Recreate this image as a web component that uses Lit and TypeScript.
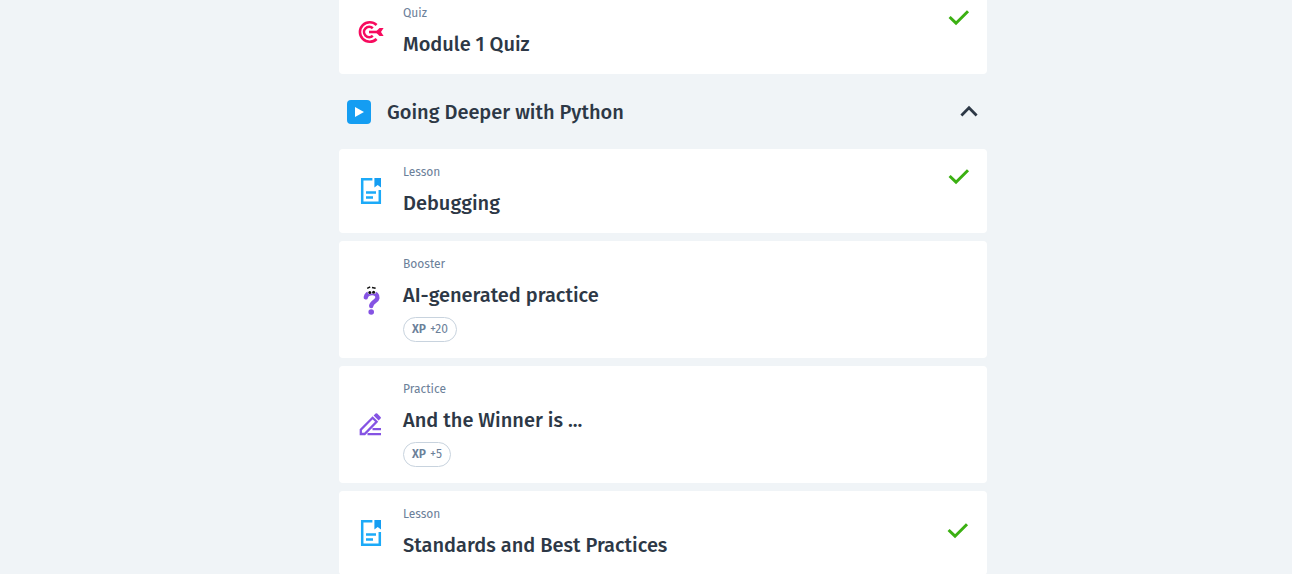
import { LitElement, html, css, svg, nothing } from "lit";
import { customElement, property, state } from "lit/decorators.js";
import { classMap } from "lit/directives/class-map.js";

type Kind = "Quiz" | "Lesson" | "Booster" | "Practice";

interface Item {
  kind: Kind;
  title: string;
  xp?: number;
  done?: boolean;
  current?: boolean;
}

const glyphs = {
  Quiz: svg`
    <g fill="none" stroke="#f70b5e" stroke-width="2.6">
      <path d="M21.6 9A9.8 9.8 0 1 0 21.6 23"/>
      <path d="M17.8 12.2A5.2 5.2 0 1 0 17.8 19.8"/>
      <path d="M14 16H25"/>
    </g>
    <path fill="#f70b5e" d="M20.5 16L24.5 12H28.6L26 16L28.6 20H24.5Z"/>`,
  Lesson: svg`
    <g fill="none" stroke="#1caaf8" stroke-width="2.5">
      <path d="M17.4 4.2H7.2V27.8H24.8V15"/>
      <path d="M11 17.6H21M11 22.4H18"/>
    </g>
    <path fill="#149df2" d="M19.4 3H26V12.5L22.7 10L19.4 12.5Z"/>`,
  Booster: svg`
    <path fill="none" stroke="#8553e3" stroke-width="4.4" stroke-linecap="round" d="M10.8 13.4C11.4 10 14.6 9 17.2 9C20.8 9 22.8 11.2 22.4 14C22 17.6 16.6 17.6 16.2 22"/>
    <circle cx="16.2" cy="28" r="2.8" fill="#8553e3"/>
    <circle cx="14.8" cy="8" r="2.3" fill="#fff"/><circle cx="18.8" cy="7.8" r="2.3" fill="#fff"/>
    <circle cx="14.8" cy="8.4" r="1.5" fill="#111"/><circle cx="18.6" cy="8.2" r="1.5" fill="#111"/>
    <path fill="none" stroke="#111" stroke-width="1.5" d="M12.2 4.4L15.2 2.8M17 3.4L20.6 4.2"/>`,
  Practice: svg`
    <g fill="none" stroke="#8553e3" stroke-width="2.3">
      <path d="M5.8 25V20.8L17.6 8.8L21.6 12.8L9.6 25Z"/>
      <path d="M17.5 20.2H26M12.5 25.2H26"/>
    </g>
    <path fill="#8553e3" d="M18.6 6.6L20.6 4.6Q21.4 3.8 22.2 4.6L25.6 8Q26.4 8.8 25.6 9.6L23.6 11.6Z"/>`,
};

@customElement("course-item")
class CourseItem extends LitElement {
  @property({ attribute: false }) item!: Item;

  static styles = css`
    :host {
      display: block;
    }
    .card {
      display: flex;
      background: #fff;
      border-radius: 4px;
      color: #2d3846;
      text-decoration: none;
    }
    .icon {
      flex: 0 0 64px;
      display: flex;
      align-items: center;
      justify-content: center;
    }
    .body {
      flex: 1;
      min-width: 0;
      padding: 16px 0;
    }
    .kind {
      font-size: 12px;
      line-height: 14px;
      color: #6b8099;
    }
    .title {
      margin: 10px 0 0;
      font-size: 20px;
      line-height: 28px;
      font-weight: 500;
    }
    .xp {
      display: inline-flex;
      align-items: center;
      gap: 4px;
      box-sizing: border-box;
      height: 25px;
      margin-top: 8px;
      padding: 0 8px 1px;
      border: 1px solid #c8d3de;
      border-radius: 13px;
      font-size: 12px;
      line-height: 14px;
      color: #6b8099;
      vertical-align: top;
    }
    .xp b {
      font-weight: 600;
    }
    .status {
      padding: 16px 16px 0 0;
    }
    .status.current {
      align-self: center;
      padding: 0 17px 4px 0;
    }
    .status svg {
      display: block;
    }
  `;

  render() {
    const { kind, title, xp, done, current } = this.item;
    return html`
      <a class="card" href="#">
        <span class="icon">
          <svg width="32" height="32" viewBox="0 0 32 32" aria-hidden="true">${glyphs[kind]}</svg>
        </span>
        <div class="body">
          <div class="kind">${kind}</div>
          <h3 class="title">${title}</h3>
          ${xp ? html`<span class="xp"><b>XP</b><span>+${xp}</span></span>` : nothing}
        </div>
        ${done
          ? html`<span class=${classMap({ status: true, current: !!current })}>
              <svg width="24" height="24" viewBox="0 0 24 24" role="img" aria-label="Completed">
                <path d="M2.6 11L9 17.2L21 5.2" fill="none" stroke="#3bb012" stroke-width="3" />
              </svg>
            </span>`
          : nothing}
      </a>
    `;
  }
}

@customElement("app-root")
class AppRoot extends LitElement {
  @state() private open = true;

  private previous: Item[] = [{ kind: "Quiz", title: "Module 1 Quiz", done: true }];

  private items: Item[] = [
    { kind: "Lesson", title: "Debugging", done: true },
    { kind: "Booster", title: "AI-generated practice", xp: 20 },
    { kind: "Practice", title: "And the Winner is ...", xp: 5 },
    { kind: "Lesson", title: "Standards and Best Practices", done: true, current: true },
  ];

  static styles = css`
    :host {
      display: block;
      height: 100vh;
      overflow: hidden;
      background: #f0f4f7;
      color: #2d3846;
      font-family: "Fira Sans", Roboto, "Noto Sans", sans-serif;
    }
    .page {
      padding-left: 34px;
    }
    .column {
      max-width: 648px;
      margin: -10px auto 0;
    }
    .list {
      display: flex;
      flex-direction: column;
      gap: 8px;
    }
    .heading {
      margin: 0;
    }
    .toggle {
      display: flex;
      align-items: center;
      gap: 16px;
      width: 100%;
      height: 75px;
      padding: 0 8px;
      border: 0;
      background: none;
      color: inherit;
      font: inherit;
      font-size: 20px;
      font-weight: 500;
      text-align: left;
      cursor: pointer;
    }
    .name {
      flex: 1;
    }
    .closed {
      transform: rotate(180deg);
    }
  `;

  private list(items: Item[]) {
    return html`<div class="list">
      ${items.map((item) => html`<course-item .item=${item}></course-item>`)}
    </div>`;
  }

  render() {
    return html`
      <main class="page">
        <div class="column">
          ${this.list(this.previous)}
          <h2 class="heading">
            <button class="toggle" aria-expanded=${this.open} @click=${() => (this.open = !this.open)}>
              <svg width="24" height="24" viewBox="0 0 24 24" aria-hidden="true">
                <rect width="24" height="24" rx="4" fill="#149df2" />
                <path d="M8 7L17 12L8 17Z" fill="#fff" />
              </svg>
              <span class="name">Going Deeper with Python</span>
              <svg class=${classMap({ closed: !this.open })} width="20" height="20" viewBox="0 0 20 20" aria-hidden="true">
                <path d="M2.4 13.4L10 5.8L17.6 13.4" fill="none" stroke="#2d3846" stroke-width="2.8" />
              </svg>
            </button>
          </h2>
          ${this.open ? this.list(this.items) : nothing}
        </div>
      </main>
    `;
  }
}
